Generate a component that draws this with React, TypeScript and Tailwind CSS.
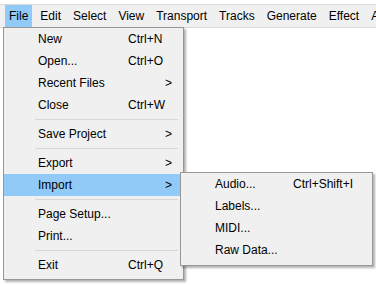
import React from "react";

type Item =
  | { kind: "item"; label: string; shortcut?: string; sub?: boolean; active?: boolean }
  | { kind: "sep" };

const menuBar = ["File", "Edit", "Select", "View", "Transport", "Tracks", "Generate", "Effect", "Analyze"];

const fileMenu: Item[] = [
  { kind: "item", label: "New", shortcut: "Ctrl+N" },
  { kind: "item", label: "Open...", shortcut: "Ctrl+O" },
  { kind: "item", label: "Recent Files", sub: true },
  { kind: "item", label: "Close", shortcut: "Ctrl+W" },
  { kind: "sep" },
  { kind: "item", label: "Save Project", sub: true },
  { kind: "sep" },
  { kind: "item", label: "Export", sub: true },
  { kind: "item", label: "Import", sub: true, active: true },
  { kind: "sep" },
  { kind: "item", label: "Page Setup..." },
  { kind: "item", label: "Print..." },
  { kind: "sep" },
  { kind: "item", label: "Exit", shortcut: "Ctrl+Q" },
];

const importMenu: Item[] = [
  { kind: "item", label: "Audio...", shortcut: "Ctrl+Shift+I" },
  { kind: "item", label: "Labels..." },
  { kind: "item", label: "MIDI..." },
  { kind: "item", label: "Raw Data..." },
];

function MenuRows({ items, labelW }: { items: Item[]; labelW: string }) {
  return (
    <div className="flex flex-col">
      {items.map((it, i) =>
        it.kind === "sep" ? (
          <div key={i} className="h-[7px] flex items-center pl-[31px] pr-[5px]">
            <div className="h-px w-full bg-[#d7d7d7]" />
          </div>
        ) : (
          <div
            key={i}
            className={`h-[22px] flex items-center pl-[34px] pr-[11px] ${it.active ? "bg-[#91c9f7]" : ""}`}
          >
            <span className={`${labelW} shrink-0`}>{it.label}</span>
            <span className="flex-1">{it.shortcut}</span>
            {it.sub && <span>&gt;</span>}
          </div>
        )
      )}
    </div>
  );
}

export default function App() {
  return (
    <div className="relative w-[376px] h-[285px] overflow-hidden bg-white text-[12px] leading-[14px] text-black font-['Liberation_Sans',Arial,sans-serif]">
      {/* Menu bar */}
      <div className="mt-[4px] h-[24px] border-y border-[#d9d9d9] bg-[#f0f0f0] flex items-stretch pl-[5px] gap-[4px] whitespace-nowrap">
        {menuBar.map((m) => (
          <div key={m} className={`px-[4px] flex items-center ${m === "File" ? "bg-[#91c9f7]" : ""}`}>
            {m}
          </div>
        ))}
      </div>

      {/* File menu */}
      <div className="absolute left-[3px] top-[27px] w-[181px] pb-[3px] bg-[#f0f0f0] border border-[#979797] shadow-[2px_2px_2px_rgba(0,0,0,0.3)]">
        <MenuRows items={fileMenu} labelW="w-[90px]" />
      </div>

      {/* Import submenu */}
      <div className="absolute left-[180px] top-[172px] w-[193px] pb-[4px] bg-[#f0f0f0] border border-[#979797] shadow-[2px_2px_2px_rgba(0,0,0,0.3)]">
        <MenuRows items={importMenu} labelW="w-[78px]" />
      </div>
    </div>
  );
}
